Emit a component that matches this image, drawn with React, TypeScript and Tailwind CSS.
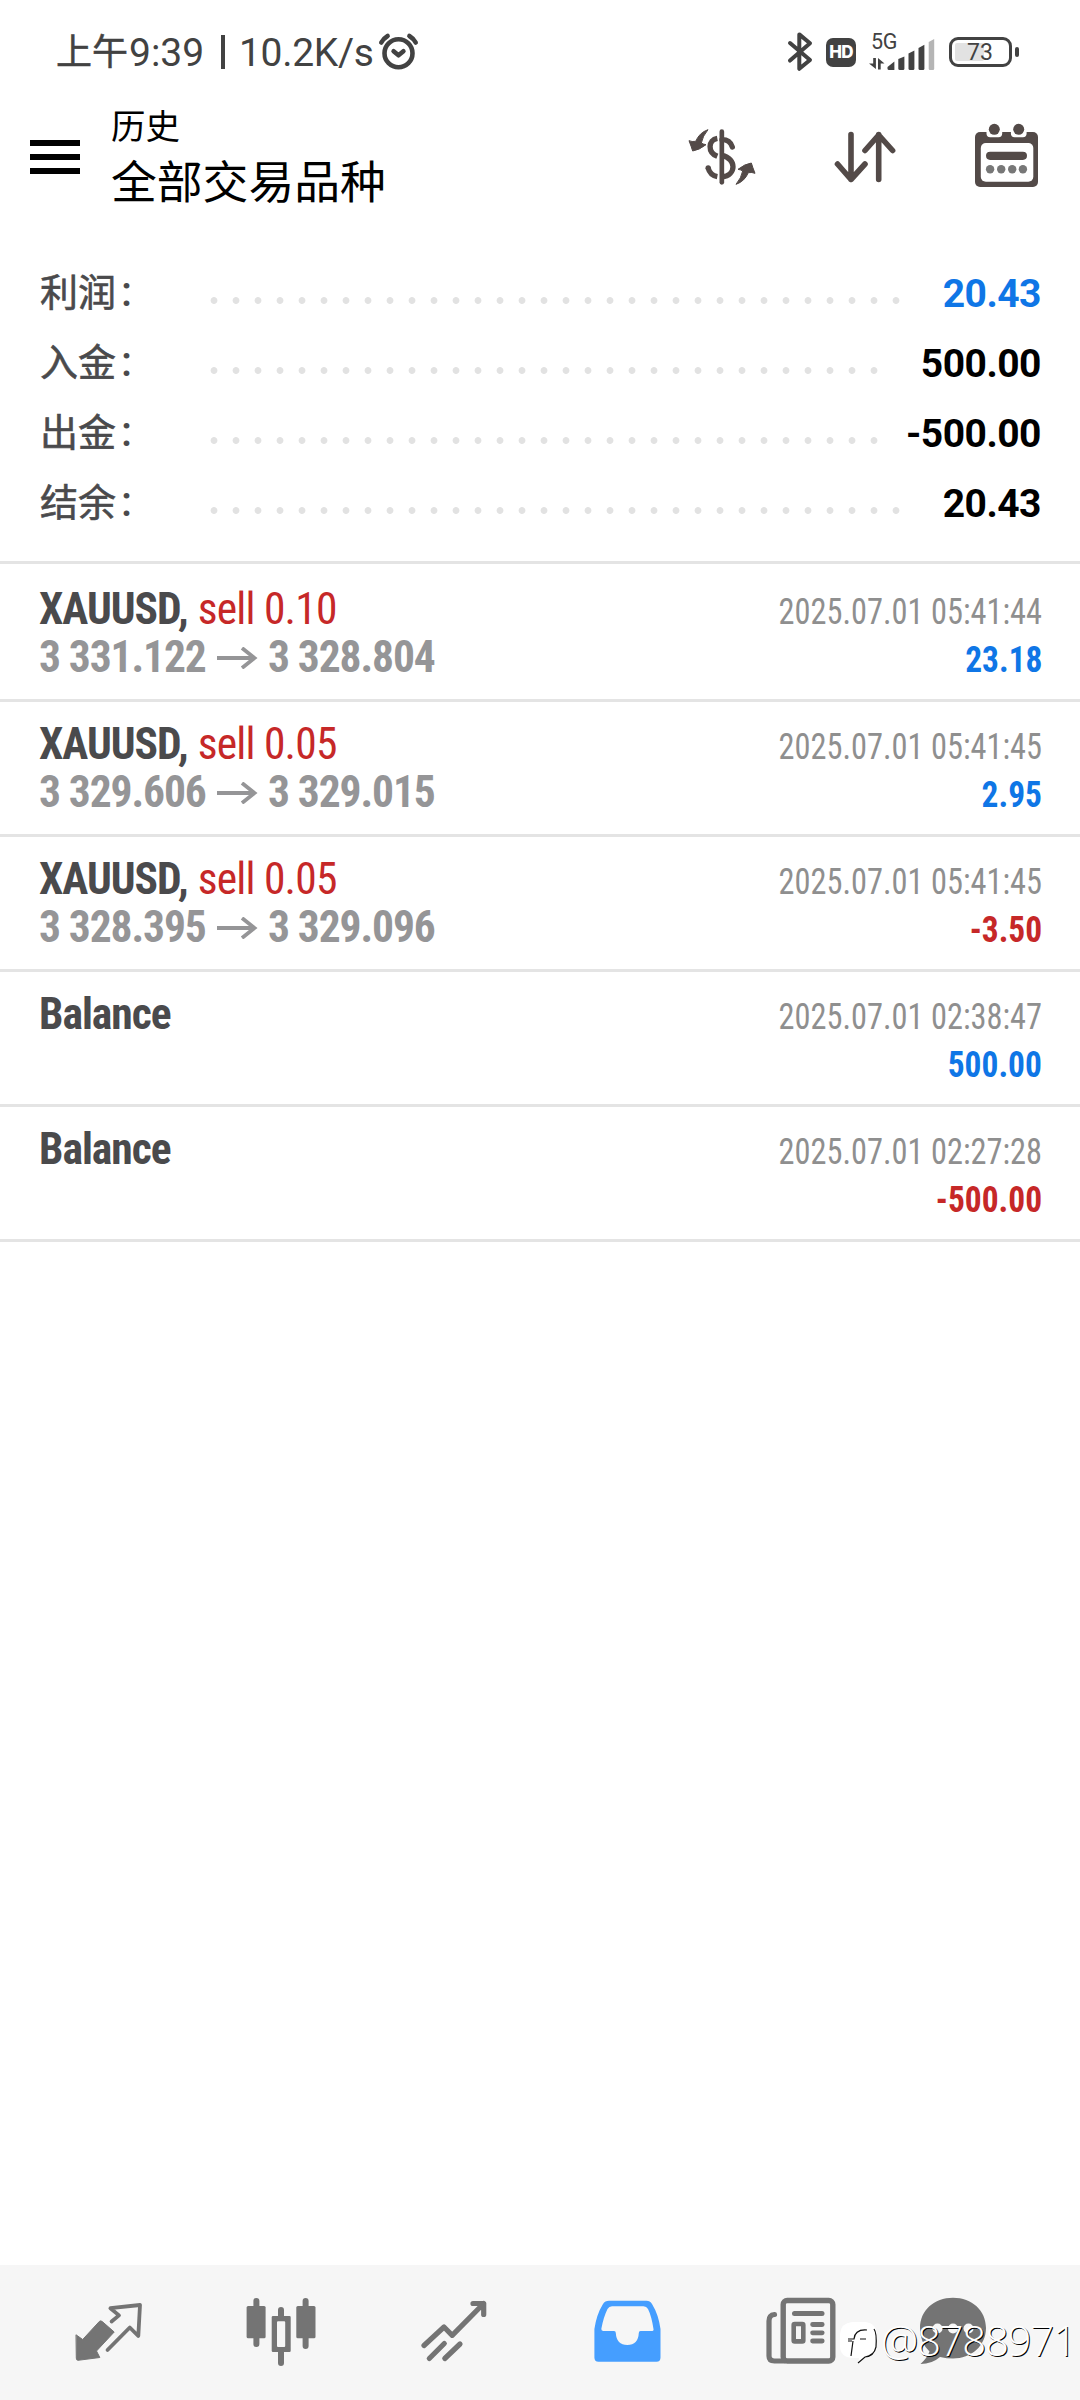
import type { ReactNode } from "react";

type Summary = { label: string; value: string; dots: string; color: string };

type Deal = {
  title: string;
  side?: string;
  open?: string;
  close?: string;
  time: string;
  profit: string;
};

const summary: Summary[] = [
  { label: "利润", value: "20.43", dots: "w-[704px]", color: "text-[#0f76e6]" },
  { label: "入金", value: "500.00", dots: "w-[682px]", color: "text-black" },
  { label: "出金", value: "-500.00", dots: "w-[682px]", color: "text-black" },
  { label: "结余", value: "20.43", dots: "w-[704px]", color: "text-black" },
];

const deals: Deal[] = [
  { title: "XAUUSD,", side: "sell 0.10", open: "3 331.122", close: "3 328.804", time: "2025.07.01 05:41:44", profit: "23.18" },
  { title: "XAUUSD,", side: "sell 0.05", open: "3 329.606", close: "3 329.015", time: "2025.07.01 05:41:45", profit: "2.95" },
  { title: "XAUUSD,", side: "sell 0.05", open: "3 328.395", close: "3 329.096", time: "2025.07.01 05:41:45", profit: "-3.50" },
  { title: "Balance", time: "2025.07.01 02:38:47", profit: "500.00" },
  { title: "Balance", time: "2025.07.01 02:27:28", profit: "-500.00" },
];

function StatusBar() {
  return (
    <div className="flex h-[104px] items-center pr-[61px] pl-[56px] text-[#424242]">
      <div className="flex items-center pt-[2px] font-['Roboto','Noto_Sans_CJK_SC',sans-serif] text-[39px] leading-[48px] whitespace-pre">
        <span className="w-[73px] text-[36px] [-webkit-text-stroke:0.5px]">上午</span>
        <span className="w-[92px] [font-weight:450]">9:39</span>
        <span className="mr-[14px] -mt-[2px] h-[34px] w-[4px] bg-[#424242]" />
        <span className="w-[135px] tracking-[-0.3px] [font-weight:450]">10.2K/s</span>
      </div>
      <svg className="ml-[4px] h-[40px] w-[42px]" viewBox="378 32 42 40" fill="none" stroke="#424242" strokeWidth="4.6" strokeLinecap="round" strokeLinejoin="round">
        <circle cx="398.5" cy="53.3" r="14" />
        <path d="M381.3 42.5Q383.5 38.5 387.6 36M415.7 42.5Q413.5 38.5 409.4 36M393.6 51.3L398.5 55.3L403.4 51.3" />
      </svg>
      <div className="ml-auto flex items-center">
        <svg className="h-[44px] w-[26px]" viewBox="787 30 26 44" fill="none" stroke="#424242" strokeWidth="4" strokeLinecap="round" strokeLinejoin="round">
          <path d="M790 43L810 60L799.3 68.8V34.4L810 43.3L790 60.6" />
        </svg>
        <span className="ml-[13px] flex h-[29px] w-[30px] items-center justify-center rounded-[7px] bg-[#424242] font-['Inter',sans-serif] text-[17px] leading-none font-extrabold tracking-[-0.8px] text-white">
          HD
        </span>
        <div className="ml-[13px] flex h-[38px] w-[66px] flex-col">
          <span className="h-[20px] pl-[2px] font-['Roboto',sans-serif] text-[21.500px] leading-[17px] tracking-[-0.4px]">5G</span>
          <svg className="-mt-[18px] h-[36px] w-[66px]" viewBox="869 33 66 36" fill="#424242">
            <path d="M873.2 56H875.9V67L869 61.5H873.2ZM878 56L884.5 61.5H880.7V67.5H878Z" />
            <path d="M887.5 65L894.4 59.5V68H889Q887.5 68 887.5 66.5Z" />
            <path d="M898.3 57L904.4 54.5V66.5Q904.4 68 903 68H899.8Q898.3 68 898.3 66.5Z" />
            <path d="M908.5 51.5L914.4 48.5V66.5Q914.4 68 913 68H910Q908.5 68 908.5 66.5Z" />
            <path d="M918.5 46L924.4 42.7V66.5Q924.4 68 923 68H920Q918.5 68 918.5 66.5Z" />
            <path d="M928.7 40L934.2 37V66.5Q934.2 68 933 68H930Q928.7 68 928.7 66.5Z" fill="#b5b5b5" />
          </svg>
        </div>
        <div className="ml-[14px] flex h-[30px] w-[63px] rounded-[9px] border-[3px] border-[#424242] p-[3px]">
          <div className="flex h-full w-[29px] justify-start rounded-[2px] bg-[#e2e2e2] pl-[12px]">
            <span className="-mt-[1px] font-['Roboto',sans-serif] text-[23px] leading-[22px] [font-weight:450]">73</span>
          </div>
        </div>
        <span className="ml-[3px] h-[10px] w-[4px] rounded-[2px] bg-[#424242]" />
      </div>
    </div>
  );
}

function CurrencyIcon() {
  return (
    <svg className="h-[60px] w-[70px]" viewBox="21 35 210 180" fill="none" stroke="#534a48" strokeWidth="16">
      <g fill="#534a48" strokeWidth="3" strokeLinejoin="round">
        <path d="M84 43Q58 52 47 78Q36 80 27 76Q34 94 38 107Q58 104 78 88Q70 87 64 83Q68 62 84 43Z" />
        <path d="M168 207Q194 198 205 172Q216 170 225 174Q218 156 214 143Q194 146 174 162Q182 163 188 167Q184 188 168 207Z" />
      </g>
      <path d="M125.5 49V201" strokeWidth="14" strokeLinecap="round" />
      <path d="M157 95Q150 73 126 73" strokeLinecap="round" />
      <path d="M112 69C84 74 82 111 112 123" />
      <path d="M126 120C170 130 170 180 126 185" />
      <path d="M84 157Q90 180 112 184" />
      <circle cx="84.5" cy="157.5" r="8" fill="#534a48" stroke="none" />
    </svg>
  );
}

function SortIcon() {
  return (
    <svg className="h-[56px] w-[64px]" viewBox="833 129 64 56" fill="none" stroke="#534a48" strokeWidth="5.6" strokeLinecap="round" strokeLinejoin="round">
      <path d="M851 134.5V179.5M837.5 164L851 179.5L865 164" />
      <path d="M878.7 179.5V134.5M865 150.5L878.7 135L892.6 150.5" />
    </svg>
  );
}

function CalendarIcon() {
  return (
    <svg className="h-[66px] w-[66px]" viewBox="973 122 66 66" fill="#534a48">
      <rect x="975" y="132" width="63" height="55" rx="5" />
      <path d="M986.5 130H1002.2V133.5Q1002.2 137.2 998.5 137.2H990.2Q986.5 137.2 986.5 133.5ZM1010.9 130H1026.6V133.5Q1026.6 137.2 1022.9 137.2H1014.6Q1010.9 137.2 1010.9 133.5Z" fill="#fff" />
      <circle cx="994.3" cy="129.3" r="5.5" />
      <circle cx="1018.7" cy="129.3" r="5.5" />
      <rect x="980.8" y="143" width="52.5" height="38.7" rx="5" fill="#fff" />
      <rect x="986" y="151.7" width="41" height="8.2" rx="4.1" />
      <g fill="#777">
        <circle cx="990.1" cy="169.3" r="4.2" />
        <circle cx="1001.2" cy="169.3" r="4.2" />
        <circle cx="1012.2" cy="169.3" r="4.2" />
        <circle cx="1022.9" cy="169.3" r="4.2" />
      </g>
    </svg>
  );
}

function Header() {
  return (
    <header className="flex h-[121px] items-start pr-[41px] pl-[30px] text-black">
      <div className="mt-[36px] flex w-[50px] flex-col gap-[8px]">
        <span className="h-[6px] bg-black" />
        <span className="h-[6px] bg-black" />
        <span className="h-[6px] bg-black" />
      </div>
      <div className="ml-[31px] flex flex-col font-['Noto_Sans_CJK_SC',sans-serif]">
        <span className="text-[34.500px] leading-[40px]">历史</span>
        <span className="mt-[7px] text-[45.800px] leading-[56px]">全部交易品种</span>
      </div>
      <div className="mt-[18px] ml-auto flex items-center">
        <div className="flex pt-[3px]"><CurrencyIcon /></div>
        <div className="ml-[76px] flex pt-[4px]"><SortIcon /></div>
        <div className="ml-[76px] flex"><CalendarIcon /></div>
      </div>
    </header>
  );
}

function SummaryRow({ row }: { row: Summary }) {
  return (
    <div className="flex h-[70px] items-center">
      <span className="w-[163px] shrink-0 font-['Roboto','Noto_Sans_CJK_SC',sans-serif] text-[38px] leading-[48px] font-medium text-[#4a4a4c]">
        <span className="font-normal [-webkit-text-stroke:0.6px]">{row.label}</span>
        <span className="ml-[5px] text-[42px]">:</span>
      </span>
      <span className={`mt-[17px] h-[7px] shrink-0 bg-[radial-gradient(circle,#e2e2e2_3px,transparent_3.8px)] bg-[length:22px_7px] bg-repeat-x ${row.dots}`} />
      <span className={`mt-[3px] ml-auto font-['Roboto',sans-serif] text-[39px] leading-[48px] font-bold tracking-[-0.5px] ${row.color}`}>{row.value}</span>
    </div>
  );
}

function DealRow({ deal }: { deal: Deal }) {
  const dealt = deal.side !== undefined;
  const profitColor = deal.profit.startsWith("-") ? "text-[#c62828]" : "text-[#0f76e6]";
  return (
    <li className="h-[135px] border-b-[3px] border-[#e4e4e4] pt-[19px] pr-[38px] pl-[39px] font-['Roboto',sans-serif] text-[43.500px] leading-[48px] [font-stretch:75%]">
      <div className="flex h-[48px] items-baseline">
        <span className="font-bold tracking-[-1px] text-[#4a4a4c]">{deal.title}</span>
        {dealt && <span className="ml-[10px] tracking-[-0.8px] text-[#c62828]">{deal.side}</span>}
        <span className="ml-auto origin-right scale-x-[0.887] text-[36.500px] text-[#8f8f8f]">{deal.time}</span>
      </div>
      {/* the strut keeps the profit baseline on rows without prices */}
      <div className="flex h-[48px] items-baseline font-bold before:content-['\200b']">
        {dealt && (
          <div className="flex items-baseline text-[#959597]">
            <span className="w-[178px] tracking-[-1.100px]">{deal.open}</span>
            <svg className="-mt-[1px] h-[22px] w-[41px] self-center" viewBox="0 0 41 22" fill="none" stroke="#959597" strokeWidth="3.8">
              <path d="M0 11H37M25 1L37.5 11L25 21" />
            </svg>
            <span className="ml-[10px] tracking-[-1.100px]">{deal.close}</span>
          </div>
        )}
        <span className={`ml-auto origin-right scale-x-[0.915] text-[36.500px] ${profitColor}`}>{deal.profit}</span>
      </div>
    </li>
  );
}

function TabIcon({ box, className = "", children }: { box: string; className?: string; children: ReactNode }) {
  return (
    <svg className={`h-[76px] w-[76px] ${className}`} viewBox={box} fill="none" stroke="#747474" strokeLinecap="round" strokeLinejoin="round">
      {children}
    </svg>
  );
}

function TabBar() {
  return (
    <nav className="relative mt-auto flex h-[135px] bg-[#f6f6f6] pt-[28px] pl-[70px]">
      <TabIcon box="70 43 76 76">
        <path d="M76.3 85L82.7 89.5L99.5 71.3Q100.8 70.3 102.3 71.6L114.2 82L96.5 101L99.8 107.5L78 110.3Q76.3 110.3 76.3 108.5Z" fill="#747474" strokeWidth="1" />
        <path d="M111.6 71.5L119 65.4L110.4 58.2L140 55L138.3 86L129.8 77.5L107.5 100" strokeWidth="3.8" />
      </TabIcon>
      <TabIcon box="243 43 76 76" className="ml-[97px]">
        <g strokeWidth="6">
          <path d="M256.4 51V94M305.6 51V96M281 60V68M281 100V113" />
        </g>
        <g fill="#747474" stroke="none">
          <rect x="246.6" y="56" width="19" height="32.3" rx="1.5" />
          <rect x="296.3" y="56" width="19.2" height="32.2" rx="1.5" />
          <path fillRule="evenodd" d="M273 66H289.5Q290.7 66 290.7 67.2V100.8Q290.7 102 289.5 102H273Q271.7 102 271.7 100.8V67.2Q271.7 66 273 66ZM278 71.3Q277 71.3 277 72.3V96Q277 97 278 97H284.2Q285.2 97 285.2 96V72.3Q285.2 71.3 284.2 71.3Z" />
        </g>
      </TabIcon>
      <TabIcon box="416 43 76 76" className="ml-[97px]">
        <path d="M424 95.5L444 77L452.2 85.3L483.7 53.5M473 53.5H483.7V64.5" strokeWidth="5.2" />
        <path d="M429.3 108.5L444.3 93.5M444.8 108.5L460 94" strokeWidth="5.2" />
      </TabIcon>
      <TabIcon box="589 43 76 76" className="ml-[97px]">
        <path fillRule="evenodd" fill="#459eff" stroke="none" d="M609 50.7H646.5Q650 50.7 652 54Q658.5 64.5 660.5 79V107.5Q660.5 111.7 656.5 111.7H598.5Q594.4 111.7 594.4 107.5V79Q596.5 64.5 603 54Q605 50.7 609 50.7ZM612 56.3Q609 56.3 607.5 59Q603.5 67 601.3 79Q601.3 81 603.5 81H614Q615.8 81 615.8 83Q616.5 95 627.3 95Q638.2 95 638.8 83Q638.8 81 640.5 81H651.5Q654 81 653.5 79Q651.5 66 648 59Q646.5 56.3 643.5 56.3Z" />
      </TabIcon>
      <TabIcon box="762 43 76 76" className="ml-[97px]">
        <rect x="783.2" y="50.5" width="49.6" height="60.5" rx="4" strokeWidth="5.4" />
        <path d="M774.5 64.5Q769 65 769 71V106Q769 111 774.5 111H784" strokeWidth="5.2" />
        <path d="M794.5 63.5H822" strokeWidth="5" />
        <rect x="793.7" y="74" width="9.6" height="17.4" rx="1" strokeWidth="4.6" />
        <path d="M812.6 74.5H822.2M812.6 82.8H822.2M812.6 91H822.2" strokeWidth="4.8" />
      </TabIcon>
      <TabIcon box="915 43 76 76" className="ml-[77px]">
        <path d="M953 47.8C972 47.8 986 60.5 986 78C986 96 971 108.5 953 108.5Q947 108.5 940 107Q932 114 920.5 114Q927.5 107.5 929.5 101.5Q920 92.5 920 78C920 60.5 934 47.8 953 47.8Z" fill="#747474" stroke="none" />
        <g fill="#f6f6f6" stroke="none">
          <circle cx="937.5" cy="78.5" r="5" />
          <circle cx="953" cy="78.5" r="5" />
          <circle cx="968.5" cy="78.5" r="5" />
        </g>
      </TabIcon>
      {/* watermark lies over the last two tabs */}
      <div className="absolute top-[50px] left-[840px] flex items-start">
        <svg className="mt-[5px] h-[46px] w-[40px]" viewBox="0 0 40 46" fill="none">
          <path d="M12 2H25Q37 3 37 16V26Q36 37 24 38L18 44L19 38H12Q0 37 0 26V14Q1 3 12 2Z" fill="#fff" />
          <path d="M34 9Q37 13 36 27Q34 36 25 37L18 43M8 19H14Q15 9 27 10M8 21H12M20 19H26M13 21L11 36" stroke="#111" strokeWidth="1.2" />
        </svg>
        <span className="ml-px font-['Open_Sans',sans-serif] text-[42px] leading-[50px] font-light tracking-[-1.300px] text-white [text-shadow:1px_1px_0_#000]">
          @8788971
        </span>
      </div>
    </nav>
  );
}

export default function App() {
  return (
    <div className="flex h-[2400px] w-[1080px] flex-col overflow-hidden bg-white">
      <StatusBar />
      <Header />
      <section className="border-b-[3px] border-[#e4e4e4] pt-[32px] pr-[39px] pb-[24px] pl-[40px]">
        {summary.map((row) => (
          <SummaryRow key={row.label} row={row} />
        ))}
      </section>
      <ul className="pt-[3px]">
        {deals.map((deal, i) => (
          <DealRow key={i} deal={deal} />
        ))}
      </ul>
      <TabBar />
    </div>
  );
}
